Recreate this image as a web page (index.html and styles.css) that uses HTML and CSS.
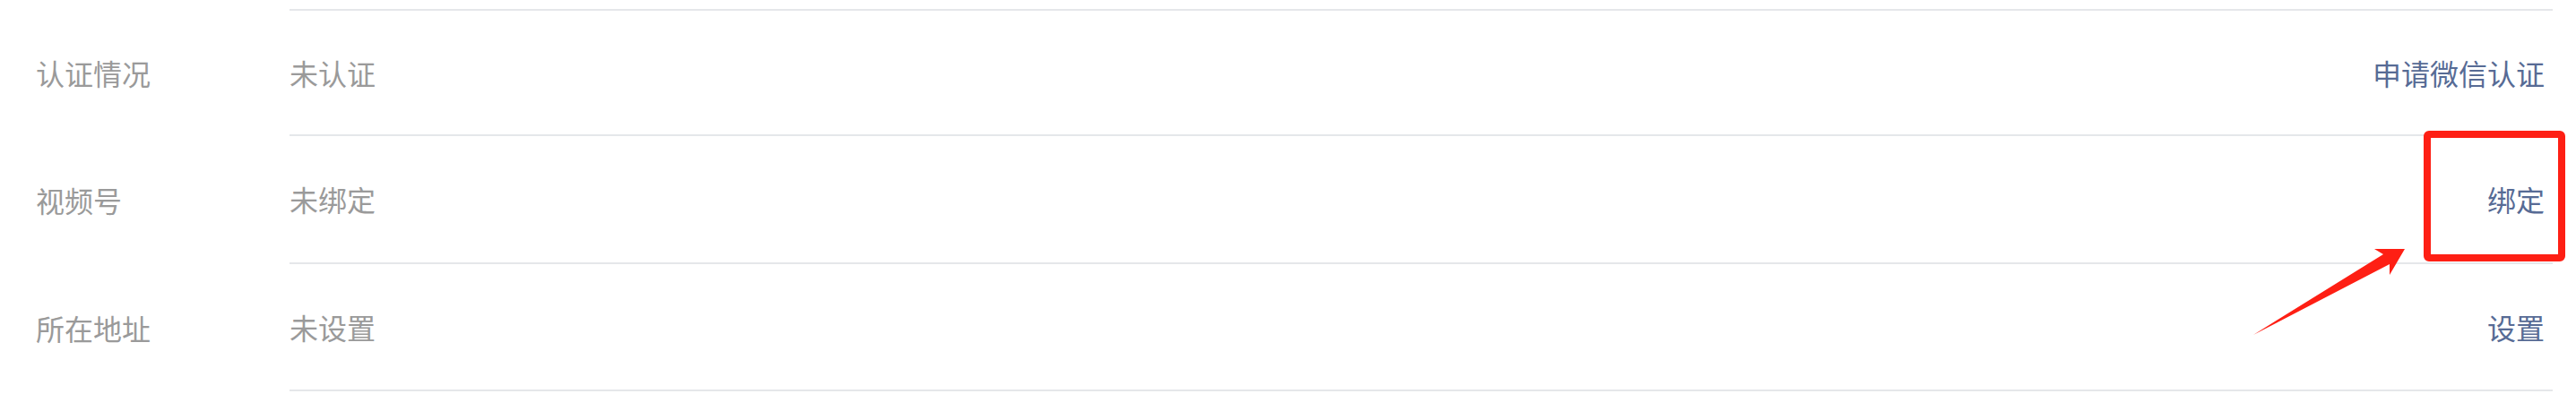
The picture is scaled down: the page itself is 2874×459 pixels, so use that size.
FILE: index.html
```html
<!DOCTYPE html>
<html lang="zh-CN">
<head>
    <meta charset="UTF-8">
    <meta name="viewport" content="width=device-width, initial-scale=1.0">
    <title>账号信息</title>
    <link rel="stylesheet" href="styles.css">
</head>
<body>
    <div class="page">
        <ul class="info-list">
            <li class="info-row">
                <span class="info-label">认证情况</span>
                <div class="info-body">
                    <span class="info-value">未认证</span>
                    <a class="info-action" href="#">申请微信认证</a>
                </div>
            </li>
            <li class="info-row">
                <span class="info-label">视频号</span>
                <div class="info-body">
                    <span class="info-value">未绑定</span>
                    <a class="info-action" href="#">绑定</a>
                </div>
            </li>
            <li class="info-row">
                <span class="info-label">所在地址</span>
                <div class="info-body">
                    <span class="info-value">未设置</span>
                    <a class="info-action" href="#">设置</a>
                </div>
            </li>
        </ul>

        <!-- annotation: highlight box + arrow -->
        <div class="mark-box"></div>
        <svg class="mark-arrow" viewBox="0 0 200 125" width="200" height="125">
            <polygon points="14,114 159,24 149,18 183,18 166,47 166,35" fill="#fe1f14"/>
        </svg>
    </div>
</body>
</html>
```

FILE: styles.css
```css
*{
    padding: 0;
    margin: 0;
    box-sizing: border-box;
}
body{
    background-color: #fff;
    font-family: "Noto Sans CJK SC", "Microsoft YaHei", sans-serif;
}
.page{
    position: relative;
    width: 2874px;
    height: 459px;
    padding: 9.5px 26px 0 0;
}
.info-list{
    list-style: none;
}
.info-row{
    display: flex;
    height: 142.5px;
}
.info-label{
    width: 323px;
    flex-shrink: 0;
    padding-left: 40px;
    display: flex;
    align-items: center;
    font-size: 32px;
    color: #9a9a9a;
}
.info-body{
    flex: 1;
    display: flex;
    align-items: center;
    justify-content: space-between;
    padding-right: 9px;
    border-bottom: 2px solid #e5e7ea;
}
.info-row:first-child .info-body{
    border-top: 2px solid #e5e7ea;
}
.info-value{
    font-size: 32px;
    color: #9a9a9a;
}
.info-action{
    font-size: 32px;
    color: #576b95;
    text-decoration: none;
}
.mark-box{
    position: absolute;
    left: 2704px;
    top: 146px;
    width: 158px;
    height: 146px;
    border: 8px solid #fe1f14;
    border-radius: 6px;
}
.mark-arrow{
    position: absolute;
    left: 2500px;
    top: 260px;
}
```
